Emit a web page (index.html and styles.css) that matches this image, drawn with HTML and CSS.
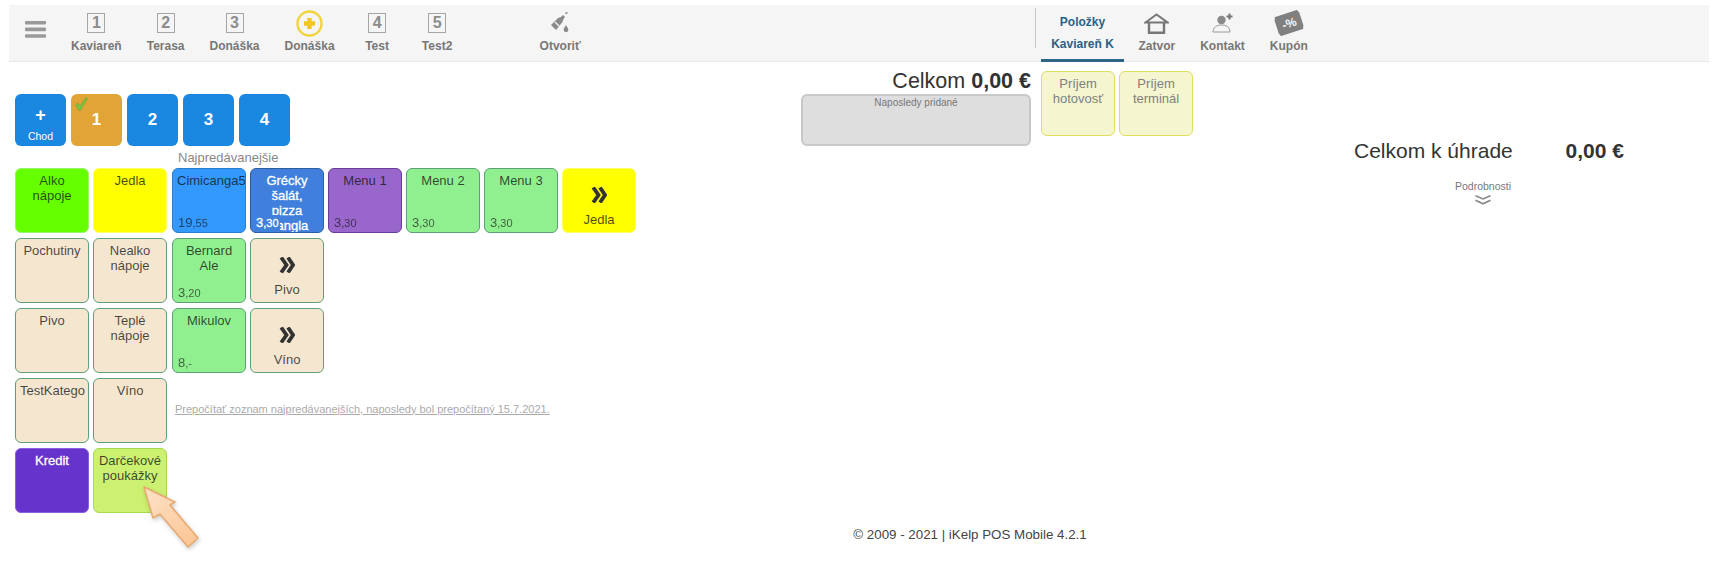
FILE: index.html
```html
<!DOCTYPE html>
<html lang="sk">
<head>
    <meta charset="UTF-8">
    <title>iKelp POS Mobile</title>
    <link rel="stylesheet" href="styles.css">
</head>
<body>
    <header class="topbar">
        <nav class="nav-left">
            <div class="menu-toggle">
                <svg width="21" height="17" viewBox="0 0 21 17"><rect width="21" height="3.6" rx="1" fill="#999"/><rect y="6.6" width="21" height="3.6" rx="1" fill="#999"/><rect y="13.2" width="21" height="3.6" rx="1" fill="#999"/></svg>
            </div>
            <a class="nav-item"><span class="nav-icon"><span class="num-box">1</span></span><span>Kaviareň</span></a>
            <a class="nav-item"><span class="nav-icon"><span class="num-box">2</span></span><span>Terasa</span></a>
            <a class="nav-item"><span class="nav-icon"><span class="num-box">3</span></span><span>Donáška</span></a>
            <a class="nav-item">
                <span class="nav-icon">
                    <svg width="27" height="27" viewBox="0 0 27 27"><circle cx="13.5" cy="13.5" r="12" fill="none" stroke="#f0d43a" stroke-width="2.4"/><path d="M13.5 8v11M8 13.5h11" stroke="#f3c61f" stroke-width="4.4"/></svg>
                </span>
                <span>Donáška</span>
            </a>
            <a class="nav-item"><span class="nav-icon"><span class="num-box">4</span></span><span>Test</span></a>
            <a class="nav-item"><span class="nav-icon"><span class="num-box">5</span></span><span>Test2</span></a>
            <a class="nav-item nav-open">
                <span class="nav-icon">
                    <svg width="20" height="22" viewBox="0 0 20 22"><path d="M1 13 L8 6 L11 5 L13 3 L15 5 L13.5 7 L12.5 10 L6 18 Z" fill="#8a8a8a"/><path d="M5 10 L9 14" stroke="#f5f5f5" stroke-width="1.2"/><path d="M15.5 1.5 L17.5 0.5" stroke="#8a8a8a" stroke-width="1.5"/><path d="M16 13 c-1.2 2.2 -2.4 3.3 -2.4 4.8 a2.4 2.4 0 0 0 4.8 0 c0 -1.5 -1.2 -2.6 -2.4 -4.8z" fill="#8a8a8a"/></svg>
                </span>
                <span>Otvoriť</span>
            </a>
        </nav>
        <div class="nav-separator"></div>
        <nav class="nav-right">
            <a class="tab-active"><span>Položky</span><span>Kaviareň K</span></a>
            <a class="nav-item">
                <span class="nav-icon">
                    <svg width="25" height="21" viewBox="0 0 25 21"><path d="M1.5 9.5 L12.5 1.5 L23.5 9.5 Z" fill="none" stroke="#777" stroke-width="2"/><path d="M5 9.5 V19.8 H20 V9.5" fill="none" stroke="#777" stroke-width="2.4"/></svg>
                </span>
                <span>Zatvor</span>
            </a>
            <a class="nav-item">
                <span class="nav-icon">
                    <svg width="21" height="20" viewBox="0 0 21 20"><circle cx="9.5" cy="7" r="4.2" fill="#8a8a8a"/><path d="M1 19 C1 14 5 12 9.5 12 C14 12 18 14 18 19 Z" fill="#f5f5f5" stroke="#999"/><path d="M17.5 0.5 v6 M14.5 3.5 h6" stroke="#777" stroke-width="2"/></svg>
                </span>
                <span>Kontakt</span>
            </a>
            <a class="nav-item">
                <span class="nav-icon">
                    <svg width="30" height="26" viewBox="0 0 30 26"><g transform="rotate(-18 15 13)"><path d="M3 3 h24 a3 3 0 0 0 1 3 v14 a3 3 0 0 0 -1 3 h-24 a3 3 0 0 0 -1 -3 v-14 a3 3 0 0 0 1 -3z" fill="#808080"/><text class="coupon-text" x="15" y="17.5" text-anchor="middle">-%</text></g></svg>
                </span>
                <span>Kupón</span>
            </a>
        </nav>
    </header>

    <main class="main">
        <section class="left">
            <div class="course-row">
                <button class="course course-add"><span class="course-plus">+</span><span class="course-name">Chod</span></button>
                <button class="course course-current">
                    <svg class="course-check" width="13" height="14" viewBox="0 0 13 14"><path d="M0.5 8 L3 6 L5 9 L11 0.5 L12.5 1.5 L5.5 13.5 L4 13.5 Z" fill="#7fc241" stroke="#5f9f30" stroke-width="0.5"/></svg>
                    1
                </button>
                <button class="course">2</button>
                <button class="course">3</button>
                <button class="course">4</button>
            </div>
            <div class="best-title">Najpredávanejšie</div>
            <div class="tile-grid">
                <div class="tile tile-lime">Alko nápoje</div>
                <div class="tile tile-yellow">Jedla</div>
                <div class="tile tile-blue">Cimicanga5<span class="price">19<small>,55</small></span></div>
                <div class="tile tile-royal">Grécky šalát, pizza mangla<span class="price">3<small>,30</small></span></div>
                <div class="tile tile-purple">Menu 1<span class="price">3<small>,30</small></span></div>
                <div class="tile tile-green">Menu 2<span class="price">3<small>,30</small></span></div>
                <div class="tile tile-green">Menu 3<span class="price">3<small>,30</small></span></div>
                <div class="tile tile-yellow tile-more">
                    <svg width="16" height="16" viewBox="0 0 16 16"><path d="M2.2 0.5 L7.5 8 L2.2 15.5 M9 0.5 L14 8 L9 15.5" fill="none" stroke="currentColor" stroke-width="3.8"/></svg>
                    Jedla
                </div>

                <div class="tile tile-beige row-start">Pochutiny</div>
                <div class="tile tile-beige">Nealko nápoje</div>
                <div class="tile tile-green">Bernard Ale<span class="price">3<small>,20</small></span></div>
                <div class="tile tile-beige tile-more">
                    <svg width="16" height="16" viewBox="0 0 16 16"><path d="M2.2 0.5 L7.5 8 L2.2 15.5 M9 0.5 L14 8 L9 15.5" fill="none" stroke="currentColor" stroke-width="3.8"/></svg>
                    Pivo
                </div>

                <div class="tile tile-beige row-start">Pivo</div>
                <div class="tile tile-beige">Teplé nápoje</div>
                <div class="tile tile-green">Mikulov<span class="price">8<small>,-</small></span></div>
                <div class="tile tile-beige tile-more">
                    <svg width="16" height="16" viewBox="0 0 16 16"><path d="M2.2 0.5 L7.5 8 L2.2 15.5 M9 0.5 L14 8 L9 15.5" fill="none" stroke="currentColor" stroke-width="3.8"/></svg>
                    Víno
                </div>

                <div class="tile tile-beige row-start">TestKatego</div>
                <div class="tile tile-beige">Víno</div>
                <a class="recount">Prepočítať zoznam najpredávanejších, naposledy bol prepočítaný 15.7.2021.</a>

                <div class="tile tile-violet row-start">Kredit</div>
                <div class="tile tile-voucher">Darčekové poukážky</div>
            </div>
        </section>

        <section class="middle">
            <div class="total">Celkom <b>0,00 €</b></div>
            <div class="last-added">Naposledy pridané</div>
        </section>

        <section class="receipts">
            <div class="tile tile-pale">Príjem hotovosť</div>
            <div class="tile tile-pale">Príjem terminál</div>
        </section>

        <section class="summary">
            <div class="summary-row"><span>Celkom k úhrade</span><b>0,00 €</b></div>
            <div class="details">
                <span>Podrobnosti</span>
                <svg width="16" height="10" viewBox="0 0 16 10"><path d="M0.5 0.8 L8 4 L15.5 0.8 M0.5 5.3 L8 8.8 L15.5 5.3" fill="none" stroke="#888" stroke-width="1.6"/></svg>
            </div>
        </section>
    </main>

    <footer class="footer">© 2009 - 2021 | iKelp POS Mobile 4.2.1</footer>

    <!-- highlight arrow over the voucher tile -->
    <svg class="pointer" width="64" height="70" viewBox="0 0 64 70">
        <defs>
            <linearGradient id="pointerFill" x1="0" y1="0" x2="1" y2="1">
                <stop offset="0" stop-color="#fde2c8"/>
                <stop offset="1" stop-color="#fbc492"/>
            </linearGradient>
        </defs>
        <path d="M4 4 L35 19 L30 22 L58 55 L48 64 L20 31 L13 35 Z" fill="url(#pointerFill)" stroke="#e8aa70" stroke-width="1.5" stroke-linejoin="round"/>
    </svg>
</body>
</html>
```

FILE: styles.css
```css
* {
    box-sizing: border-box;
}
body {
    margin: 0;
    padding-top: 5px;
    min-height: 100vh;
    background-color: #fff;
    font-family: "Liberation Sans", Arial, sans-serif;
    color: #333;
    position: relative;
}
.topbar {
    display: flex;
    height: 57px;
    margin: 0 10px 0 9px;
    background-color: #f5f5f5;
    border-bottom: 1px solid #e8e8e8;
}
.nav-left {
    display: flex;
    width: 1026px;
}
.nav-right {
    display: flex;
}
.menu-toggle {
    width: 49.5px;
    padding: 16px 0 0 16px;
}
.nav-item {
    display: flex;
    flex-direction: column;
    align-items: center;
    min-width: 60px;
    padding: 3px 12.5px 0;
    font-size: 12px;
    font-weight: bold;
    line-height: 14px;
    color: #777;
    white-space: nowrap;
}
.nav-open {
    margin-left: 60px;
}
.nav-icon {
    display: flex;
    align-items: center;
    justify-content: center;
    height: 30px;
    margin-bottom: 1px;
}
.num-box {
    width: 18px;
    height: 20px;
    border: 1px solid #a5a5a5;
    font-size: 16px;
    font-weight: bold;
    line-height: 18px;
    text-align: center;
    color: #8c8c8c;
}
.nav-separator {
    width: 1px;
    height: 40px;
    margin: 3px 5px 0 0;
    background-color: #c8c8c8;
}
.tab-active {
    display: flex;
    flex-direction: column;
    align-items: center;
    gap: 8px;
    width: 83px;
    height: 57px;
    margin-right: 2px;
    padding-top: 10px;
    border-bottom: 3px solid #2d6488;
    font-size: 12px;
    font-weight: bold;
    line-height: 14px;
    color: #2d5f85;
}
.coupon-text {
    font-family: "Liberation Sans", Arial, sans-serif;
    font-size: 12px;
    fill: #f5f5f5;
}

.main {
    display: flex;
    align-items: flex-start;
}
.left {
    width: 786px;
    margin-left: 15px;
    padding-top: 32px;
}
.course-row {
    display: flex;
    gap: 5px;
}
.course {
    position: relative;
    display: flex;
    flex-direction: column;
    align-items: center;
    justify-content: center;
    width: 51px;
    height: 52px;
    padding: 0;
    border: none;
    border-radius: 6px;
    background-color: #1a88e0;
    font-family: inherit;
    font-size: 17px;
    font-weight: bold;
    color: #fff;
}
.course-current {
    background-color: #e3a437;
}
.course-add {
    justify-content: flex-start;
    padding-top: 12px;
}
.course-plus {
    font-size: 18px;
    line-height: 18px;
}
.course-name {
    margin-top: 5px;
    font-size: 10.5px;
    font-weight: normal;
    line-height: 14px;
}
.course-check {
    position: absolute;
    top: 3px;
    left: 4px;
}
.best-title {
    height: 22px;
    margin-left: 163px;
    font-size: 13px;
    line-height: 24px;
    color: #888;
}
.tile-grid {
    display: grid;
    grid-template-columns: 74px 75px repeat(6, 74px);
    grid-auto-rows: 65px;
    gap: 5px 4px;
}
.tile {
    position: relative;
    width: 74px;
    height: 65px;
    padding: 4px 4px 0;
    overflow: hidden;
    border: 1px solid #5f9f7a;
    border-radius: 6px;
    font-size: 13px;
    line-height: 15px;
    text-align: center;
    color: rgba(20, 20, 20, 0.78);
}
.row-start {
    grid-column: 1;
}
.tile-lime {
    background-color: #66ff00;
    border-color: #a0f070;
}
.tile-yellow {
    background-color: #ffff00;
    border-color: #ffff66;
}
.tile-blue {
    background-color: #3399ff;
    border-color: #2a7ccc;
}
.tile-royal {
    background-color: #4080dc;
    border-color: #2c5f9f;
    color: #fff;
    -webkit-text-stroke: 0.3px #fff;
}
.tile-purple {
    background-color: #9966cc;
    border-color: #6a3d99;
}
.tile-green {
    background-color: #90f090;
}
.tile-beige {
    background-color: #f5e6d0;
}
.tile-violet {
    background-color: #6633cc;
    border-color: #8a60e0;
    color: #fff;
    -webkit-text-stroke: 0.3px #fff;
}
.tile-voucher {
    background-color: #ccf070;
    border-color: #a8d850;
}
.tile-pale {
    background-color: #f5f5d0;
    border-color: #dede60;
    color: #808080;
}
.tile-more {
    padding-top: 18px;
    line-height: 22px;
}
.tile-more svg {
    display: block;
    margin: 0 auto 6px;
    color: #333;
}
.price {
    position: absolute;
    left: 5px;
    bottom: 1px;
    line-height: 15px;
    opacity: 0.85;
}
.price small {
    font-size: 11px;
}
.tile-royal .price {
    padding-right: 1px;
    opacity: 1;
    background-color: #4080dc;
}
.recount {
    grid-column: 3 / 9;
    align-self: center;
    margin: 0 0 4px 3px;
    font-size: 11px;
    color: #aaa;
    text-decoration: underline;
    white-space: nowrap;
}

.middle {
    width: 230px;
    padding-top: 7px;
}
.total {
    height: 25px;
    font-size: 21.5px;
    line-height: 24px;
    text-align: right;
    white-space: nowrap;
}
.last-added {
    height: 52px;
    border: 2px solid #c8c8c8;
    border-radius: 6px;
    background-color: #dedede;
    font-size: 10px;
    line-height: 14px;
    text-align: center;
    color: #777;
}
.receipts {
    display: flex;
    gap: 4px;
    margin: 9px 0 0 10px;
}
.summary {
    width: 270px;
    margin-left: 161px;
    padding-top: 77px;
}
.summary-row {
    display: flex;
    justify-content: space-between;
    font-size: 21px;
    line-height: 24px;
}
.details {
    display: flex;
    flex-direction: column;
    align-items: center;
    width: 258px;
    margin-top: 16px;
    font-size: 10.5px;
    line-height: 14px;
    color: #777;
}
.details svg {
    margin-top: 2px;
}
.footer {
    margin-top: 14px;
    padding-left: 221px;
    font-size: 13.33px;
    line-height: 16px;
    text-align: center;
    color: #444;
}
.pointer {
    position: absolute;
    left: 140px;
    top: 483px;
    filter: drop-shadow(1px 2px 2px rgba(0, 0, 0, 0.2));
}
```
